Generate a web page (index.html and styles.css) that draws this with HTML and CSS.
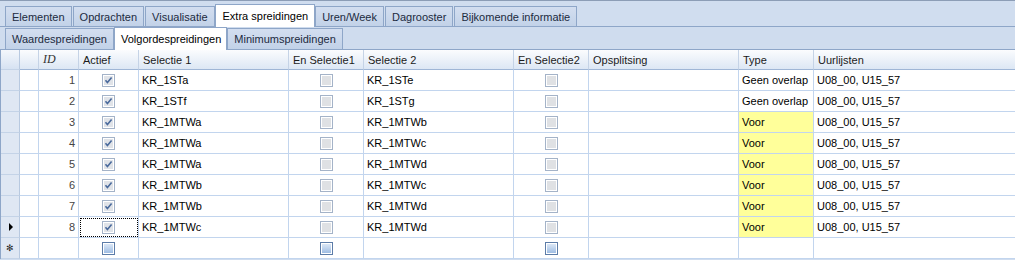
FILE: index.html
```html
<!DOCTYPE html>
<html>
<head>
<meta charset="utf-8">
<link rel="stylesheet" href="styles.css">
</head>
<body>
<div class="frame">
  <div class="tabs1">
    <div class="tab">Elementen</div>
    <div class="tab">Opdrachten</div>
    <div class="tab">Visualisatie</div>
    <div class="tab active">Extra spreidingen</div>
    <div class="tab">Uren/Week</div>
    <div class="tab">Dagrooster</div>
    <div class="tab">Bijkomende informatie</div>
  </div>
  <div class="tabs2">
    <div class="tab">Waardespreidingen</div>
    <div class="tab active">Volgordespreidingen</div>
    <div class="tab">Minimumspreidingen</div>
  </div>
  <div class="grid" id="grid">
    <div class="row head">
      <div class="c rh"></div><div class="c"></div>
      <div class="c"><i>ID</i></div>
      <div class="c">Actief</div>
      <div class="c">Selectie 1</div>
      <div class="c">En Selectie1</div>
      <div class="c">Selectie 2</div>
      <div class="c">En Selectie2</div>
      <div class="c">Opsplitsing</div>
      <div class="c">Type</div>
      <div class="c last">Uurlijsten</div>
    </div>
  </div>
</div>
<script src="script.js"></script>
</body>
</html>
```
FILE: script.js
```js
var data = [
  [1,"KR_1STa","KR_1STe","Geen overlap",false],
  [2,"KR_1STf","KR_1STg","Geen overlap",false],
  [3,"KR_1MTWa","KR_1MTWb","Voor",true],
  [4,"KR_1MTWa","KR_1MTWc","Voor",true],
  [5,"KR_1MTWa","KR_1MTWd","Voor",true],
  [6,"KR_1MTWb","KR_1MTWc","Voor",true],
  [7,"KR_1MTWb","KR_1MTWd","Voor",true],
  [8,"KR_1MTWc","KR_1MTWd","Voor",true]
];
var checked = '<svg class="cb" width="13" height="13" viewBox="0 0 13 13"><rect x="0.5" y="0.5" width="12" height="12" fill="#fff" stroke="#a4b3c8"/><rect x="2" y="2" width="9" height="9" fill="#e0e3e8"/><path d="M3.5 6.2 L5.4 8.4 L9.6 3.4" fill="none" stroke="#4a6a9c" stroke-width="1.6"/></svg>';
var unchecked = '<svg class="cb" width="13" height="13" viewBox="0 0 13 13"><rect x="0.5" y="0.5" width="12" height="12" fill="#fff" stroke="#a4b3c8"/><rect x="2" y="2" width="9" height="9" fill="#dfe1e4"/></svg>';
var blank = '<svg class="cb" width="13" height="13" viewBox="0 0 13 13"><defs><linearGradient id="g" x1="0" y1="0" x2="0" y2="1"><stop offset="0" stop-color="#dbe7f6"/><stop offset="1" stop-color="#9fbde3"/></linearGradient></defs><rect x="0.5" y="0.5" width="12" height="12" fill="#fff" stroke="#5c7ca8"/><rect x="2" y="2" width="9" height="9" fill="url(#g)"/></svg>';
var g = document.getElementById('grid');
var html = '';
data.forEach(function(r){
  var cur = r[0] === 8;
  html += '<div class="row">' +
    '<div class="c rh">' + (cur ? '<span class="arrow"></span>' : '') + '</div>' +
    '<div class="c"></div>' +
    '<div class="c num">' + r[0] + '</div>' +
    '<div class="c ctr' + (cur ? ' focus' : '') + '">' + checked + '</div>' +
    '<div class="c">' + r[1] + '</div>' +
    '<div class="c ctr">' + unchecked + '</div>' +
    '<div class="c">' + r[2] + '</div>' +
    '<div class="c ctr">' + unchecked + '</div>' +
    '<div class="c"></div>' +
    '<div class="c' + (r[4] ? ' yellow' : '') + '">' + r[3] + '</div>' +
    '<div class="c last">U08_00, U15_57</div>' +
    '</div>';
});
html += '<div class="row">' +
  '<div class="c rh"><span class="star">&#x273B;</span></div>' +
  '<div class="c"></div><div class="c"></div>' +
  '<div class="c ctr">' + blank + '</div>' +
  '<div class="c"></div>' +
  '<div class="c ctr">' + blank + '</div>' +
  '<div class="c"></div>' +
  '<div class="c ctr">' + blank + '</div>' +
  '<div class="c"></div><div class="c"></div><div class="c last"></div></div>';
g.insertAdjacentHTML('beforeend', html);
```
FILE: styles.css
```css
html, body {
  margin: 0;
  padding: 0;
  background: #ffffff;
}
body {
  font-family: "Liberation Sans", Arial, sans-serif;
  font-size: 11px;
  color: #000;
}
.frame {
  width: 1015px;
  height: 260px;
  background: #d0ddef;
  border-top: 1px solid #8c9db6;
  box-sizing: border-box;
  overflow: hidden;
}
.tabs1 {
  display: flex;
  align-items: flex-end;
  height: 25px;
  padding-left: 5px;
  border-bottom: 1px solid #8ea6c8;
  background: #d0ddef;
}
.tabs2 {
  display: flex;
  align-items: flex-end;
  height: 22px;
  padding-left: 5px;
  background: #cfdcee;
  border-bottom: 1px solid #8ea6c8;
}
.tab {
  box-sizing: border-box;
  height: 20px;
  padding: 0 6px;
  margin-right: 1px;
  display: flex;
  align-items: center;
  background: linear-gradient(#d3def0, #c2d2e8);
  border: 1px solid #8ea6c8;
  border-bottom: none;
  color: #1c2a3e;
  white-space: nowrap;
}
.tabs2 .tab {
  height: 21px;
}
.tab.active {
  background: #fff;
  height: 23px;
  padding: 0 6px 0 7px;
  margin: 0 0 -1px -1px;
  border-color: #8ea6c8;
  color: #000;
}
.tabs2 .tab.active {
  height: 23px;
  padding: 0 5px 0 6px;
}
.grid {
  background: #fff;
  border-left: 1px solid #8ea6c8;
}
.row {
  display: grid;
  grid-template-columns: 19px 19px 40px 60px 150px 75px 150px 75px 150px 75px 1fr;
  height: 21px;
}
.row.head {
  height: 20px;
  background: linear-gradient(#fbfcfe, #dbe6f4);
}
.c {
  box-sizing: border-box;
  border-right: 1px solid #c2d5ee;
  border-bottom: 1px solid #c2d5ee;
  padding: 0 3px;
  display: flex;
  align-items: center;
  white-space: nowrap;
  overflow: hidden;
  position: relative;
}
.head .c {
  border-right: 1px solid #c5d3e6;
  border-bottom: 1px solid #9fb6d6;
  color: #1b1b1b;
  padding-left: 4px;
}
.head .c i {
  font-family: "Liberation Serif", serif;
  font-size: 12px;
  color: #333;
}
.c.rh {
  background: #dfe7f3;
  border-right: 1px solid #b8c9e0;
  border-bottom: 1px solid #c4d3e7;
  justify-content: center;
  padding: 0;
}
.head .c.rh {
  background: linear-gradient(#f4f7fc, #d6e2f2);
}
.c.last {
  border-right: none;
}
.num {
  justify-content: flex-end;
  color: #444;
}
.ctr {
  justify-content: center;
}
.yellow {
  background: #ffff9a;
}
.focus {
  outline: 1px dotted #000;
  outline-offset: -2px;
}
.arrow {
  width: 0;
  height: 0;
  border-top: 4px solid transparent;
  border-bottom: 4px solid transparent;
  border-left: 4px solid #000;
  margin-left: 1px;
}
.star {
  font-size: 9px;
  line-height: 1;
  color: #222;
}
.cb {
  display: block;
}
```
